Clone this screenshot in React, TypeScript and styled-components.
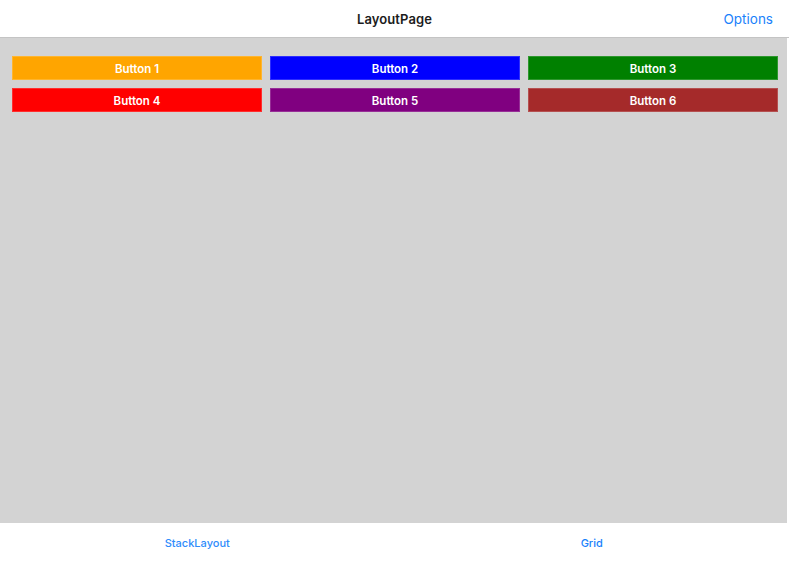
import React, { useState } from 'react';
import styled, { createGlobalStyle } from 'styled-components';

const GlobalStyle = createGlobalStyle`
  html, body {
    margin: 0;
    padding: 0;
    background: #ffffff;
  }
  body {
    font-family: Inter, "Liberation Sans", Arial, sans-serif;
    -webkit-font-smoothing: antialiased;
  }
  * { box-sizing: border-box; }
`;

type Tile = { label: string; color: string };

const tiles: Tile[] = [
  { label: 'Button 1', color: '#ffa500' },
  { label: 'Button 2', color: '#0000ff' },
  { label: 'Button 3', color: '#008000' },
  { label: 'Button 4', color: '#ff0000' },
  { label: 'Button 5', color: '#800080' },
  { label: 'Button 6', color: '#a52a2a' },
];

const tabs = ['StackLayout', 'Grid'];

const App: React.FC = () => {
  const [activeTab, setActiveTab] = useState('Grid');

  return (
    <>
      <GlobalStyle />
      <Window>
        <NavBar>
          <Spacer />
          <Title>LayoutPage</Title>
          <NavAction>Options</NavAction>
        </NavBar>

        <Content>
          <ButtonGrid>
            {tiles.map((t) => (
              <ColorButton key={t.label} $color={t.color}>
                {t.label}
              </ColorButton>
            ))}
          </ButtonGrid>
        </Content>

        <TabBar>
          {tabs.map((tab) => (
            <TabItem key={tab} $active={activeTab === tab} onClick={() => setActiveTab(tab)}>
              {tab}
            </TabItem>
          ))}
        </TabBar>
      </Window>
    </>
  );
};

// --- STYLED COMPONENTS ---
const Window = styled.div`
  width: 789px;
  height: 563px;
  display: flex;
  flex-direction: column;
  background: #ffffff;
  border-radius: 0 0 13px 13px;
  overflow: hidden;
`;

const NavBar = styled.header`
  height: 38px;
  flex: 0 0 38px;
  display: grid;
  grid-template-columns: 1fr auto 1fr;
  align-items: center;
  padding: 0 16px 0 16px;
  background: #ffffff;
  border-bottom: 1px solid #c4c4c4;
`;

const Spacer = styled.div``;

const Title = styled.h1`
  margin: 0;
  font-size: 13px;
  font-weight: 600;
  color: #1c1c1c;
  letter-spacing: 0.1px;
`;

const NavAction = styled.button`
  justify-self: end;
  background: none;
  border: none;
  padding: 0;
  font-family: inherit;
  font-size: 13.5px;
  color: #1a82fb;
  cursor: pointer;
`;

const Content = styled.main`
  flex: 1;
  background: #d3d3d3;
  padding: 18px 9px 0 12px;
  margin-right: 2px;
`;

const ButtonGrid = styled.div`
  display: grid;
  grid-template-columns: repeat(3, 250px);
  grid-auto-rows: 24px;
  column-gap: 8px;
  row-gap: 8px;
`;

const ColorButton = styled.button<{ $color: string }>`
  background-color: ${({ $color }) => $color};
  border: 1px solid rgba(255, 255, 255, 0.18);
  color: #ffffff;
  font-family: inherit;
  font-size: 11.5px;
  font-weight: 600;
  padding: 2px 0 0 0;
  cursor: pointer;
`;

const TabBar = styled.nav`
  flex: 0 0 40px;
  display: grid;
  grid-template-columns: 1fr 1fr;
  align-items: center;
  background: #ffffff;
`;

const TabItem = styled.button<{ $active?: boolean }>`
  background: none;
  border: none;
  padding: 0;
  font-family: inherit;
  font-size: 11px;
  font-weight: 500;
  color: ${({ $active }) => ($active ? '#1a82fb' : '#2f8cfb')};
  cursor: pointer;
`;

export default App;
